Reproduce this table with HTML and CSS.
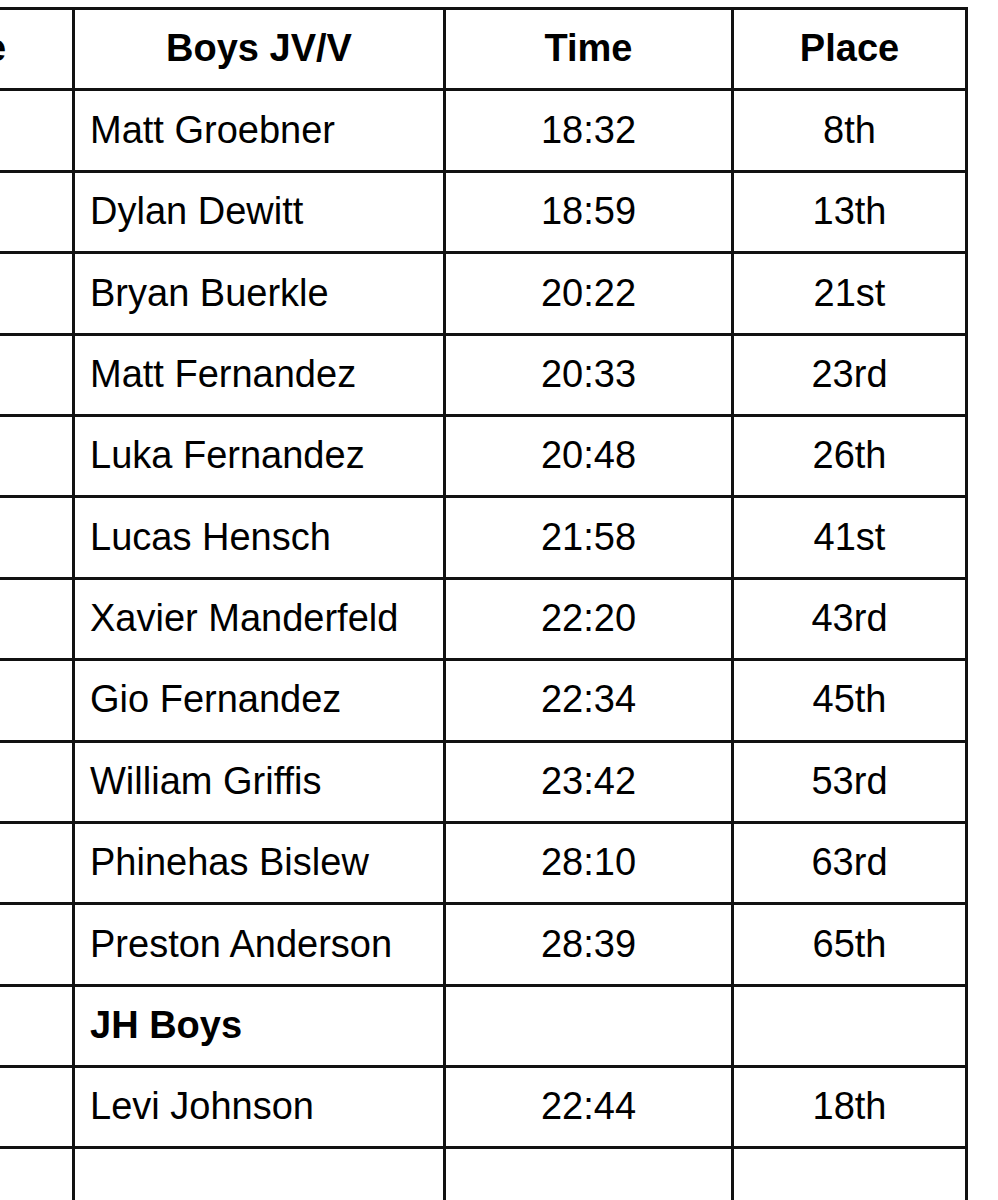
FILE: index.html
```html
<!DOCTYPE html>
<html lang="en">
<head>
<meta charset="utf-8">
<title>Results</title>
<link rel="stylesheet" href="styles.css">
</head>
<body>
<div class="sheet">
  <table class="results">
    <colgroup>
      <col class="c-prev">
      <col class="c-name">
      <col class="c-time">
      <col class="c-place">
    </colgroup>
    <thead>
      <tr>
        <th class="center">Place</th>
        <th class="center">Boys JV/V</th>
        <th class="center">Time</th>
        <th class="center">Place</th>
      </tr>
    </thead>
    <tbody>
      <tr><td></td><td class="name">Matt Groebner</td><td class="center">18:32</td><td class="center">8th</td></tr>
      <tr><td></td><td class="name">Dylan Dewitt</td><td class="center">18:59</td><td class="center">13th</td></tr>
      <tr><td></td><td class="name">Bryan Buerkle</td><td class="center">20:22</td><td class="center">21st</td></tr>
      <tr><td></td><td class="name">Matt Fernandez</td><td class="center">20:33</td><td class="center">23rd</td></tr>
      <tr><td></td><td class="name">Luka Fernandez</td><td class="center">20:48</td><td class="center">26th</td></tr>
      <tr><td></td><td class="name">Lucas Hensch</td><td class="center">21:58</td><td class="center">41st</td></tr>
      <tr><td></td><td class="name">Xavier Manderfeld</td><td class="center">22:20</td><td class="center">43rd</td></tr>
      <tr><td></td><td class="name">Gio Fernandez</td><td class="center">22:34</td><td class="center">45th</td></tr>
      <tr><td></td><td class="name">William Griffis</td><td class="center">23:42</td><td class="center">53rd</td></tr>
      <tr><td></td><td class="name">Phinehas Bislew</td><td class="center">28:10</td><td class="center">63rd</td></tr>
      <tr><td></td><td class="name">Preston Anderson</td><td class="center">28:39</td><td class="center">65th</td></tr>
      <tr><td></td><td class="name section">JH Boys</td><td></td><td></td></tr>
      <tr><td></td><td class="name">Levi Johnson</td><td class="center">22:44</td><td class="center">18th</td></tr>
      <tr><td></td><td class="name"></td><td></td><td></td></tr>
    </tbody>
  </table>
</div>
</body>
</html>
```
FILE: styles.css
```css
html, body {
  margin: 0;
  padding: 0;
  background: #ffffff;
}

.sheet {
  width: 998px;
  height: 1200px;
  overflow: hidden;
  padding-top: 7px;
  box-sizing: border-box;
}

.results {
  border-collapse: collapse;
  table-layout: fixed;
  margin-left: -162px;
  width: 1127px;
  font-family: "Liberation Sans", Arial, sans-serif;
  font-size: 38px;
  color: #000;
}

.c-prev { width: 234px; }
.c-name { width: 371px; }
.c-time { width: 288px; }
.c-place { width: 234px; }

.results th,
.results td {
  border: 3px solid #111;
  height: 81.4px;
  padding: 0 15px;
  box-sizing: border-box;
  vertical-align: middle;
  line-height: 1.15;
  white-space: nowrap;
  font-weight: normal;
}

.results th {
  font-weight: bold;
}

.results .center {
  text-align: center;
}

.results .name {
  text-align: left;
}

.results .section {
  font-weight: bold;
}
```
